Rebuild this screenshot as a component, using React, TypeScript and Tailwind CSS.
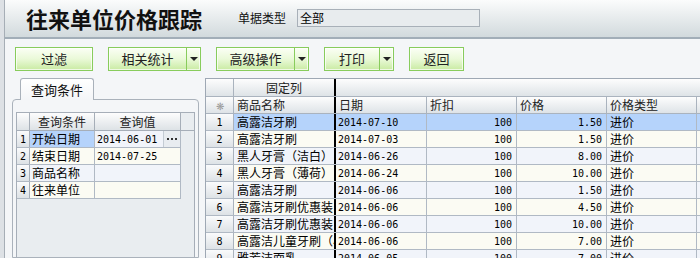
const CJK = "font-['Noto_Sans_CJK_SC','Noto_Sans',sans-serif]";
const MONO = "font-['DejaVu_Sans_Mono','Liberation_Mono',monospace] text-[10px]";

const rows = [
  { name: "高露洁牙刷", date: "2014-07-10", off: "100", price: "1.50", type: "进价", unit: "美佳超市" },
  { name: "高露洁牙刷", date: "2014-07-03", off: "100", price: "1.50", type: "进价", unit: "美佳超市" },
  { name: "黑人牙膏（洁白）", date: "2014-06-26", off: "100", price: "8.00", type: "进价", unit: "美佳超市" },
  { name: "黑人牙膏（薄荷）", date: "2014-06-24", off: "100", price: "10.00", type: "进价", unit: "美佳超市" },
  { name: "高露洁牙刷", date: "2014-06-06", off: "100", price: "1.50", type: "进价", unit: "工贸公司" },
  { name: "高露洁牙刷优惠装", date: "2014-06-06", off: "100", price: "4.50", type: "进价", unit: "工贸公司" },
  { name: "高露洁牙刷优惠装", date: "2014-06-06", off: "100", price: "10.00", type: "进价", unit: "工贸公司" },
  { name: "高露洁儿童牙刷（小）", date: "2014-06-06", off: "100", price: "7.00", type: "进价", unit: "工贸公司" },
  { name: "雅芳洁面乳", date: "2014-06-05", off: "100", price: "7.00", type: "进价", unit: "工贸公司" },
];

const conditions = [
  { label: "开始日期", value: "2014-06-01" },
  { label: "结束日期", value: "2014-07-25" },
  { label: "商品名称", value: "" },
  { label: "往来单位", value: "" },
];

function ToolButton({ label, width, menu }: { label: string; width: string; menu?: boolean }) {
  return (
    <div
      className={`flex h-[24px] shrink-0 ${width} border border-[#88cc5c] bg-linear-to-b from-[#fbfff5] via-[#eaf9d8] to-[#c9eba2] shadow-[inset_0_0_0_1px_rgba(255,255,255,0.7)]`}
    >
      <div className="flex flex-1 items-center justify-center text-[13px] text-[#222]">{label}</div>
      {menu && (
        <div className="flex w-[14px] shrink-0 items-center justify-center border-l border-[#88cc5c]">
          <span className="h-0 w-0 border-x-[4px] border-t-[4px] border-x-transparent border-t-[#222]" />
        </div>
      )}
    </div>
  );
}

function ConditionPanel() {
  return (
    <div className="flex w-[200px] shrink-0 flex-col pl-[7px] pr-[6px]">
      <div className="relative z-10 -mb-px ml-[8px] flex h-[22px] w-[74px] items-center justify-center rounded-t-[3px] border border-b-0 border-[#a9b1ba] bg-linear-to-b from-white to-[#f3f5f7] text-[13px] text-[#111]">
        查询条件
      </div>
      <div className="flex flex-1 flex-col rounded-t-[4px] border border-[#aab2bb] bg-[#f4f6f8] px-[3px] pt-[12px]">
        <div className="flex-1 border-l border-r border-t border-[#a6aeb8] bg-[#e9edf0] text-[12px]">
          <div className="flex h-[18px] border-b border-[#a6aeb8]">
            <div className="w-[13px] shrink-0 border-r border-[#a6aeb8] bg-linear-to-b from-[#fdfdfd] to-[#dde2e6]" />
            <div className="flex w-[65px] shrink-0 items-center justify-center border-r border-[#a6aeb8] bg-linear-to-b from-[#fdfdfd] to-[#dde2e6] text-[#222]">
              查询条件
            </div>
            <div className="flex w-[86px] shrink-0 items-center justify-center border-r border-[#a6aeb8] bg-linear-to-b from-[#fdfdfd] to-[#dde2e6] text-[#222]">
              查询值
            </div>
          </div>
          {conditions.map((c, i) => (
            <div key={c.label} className="flex h-[17px] w-[164px] border-b border-[#b0b9c4]">
              <div className={`flex w-[13px] shrink-0 items-center justify-center border-r border-[#a6aeb8] bg-linear-to-b from-[#fafbfc] to-[#dde2e6] ${MONO}`}>
                {i + 1}
              </div>
              <div
                className={`flex w-[65px] shrink-0 items-center whitespace-nowrap border-r border-[#b0b9c4] pl-[2px] ${
                  i === 0 ? "bg-[#b5d3fb]" : i % 2 ? "bg-[#fbfbf3]" : "bg-[#f1f4fa]"
                }`}
              >
                {c.label}
              </div>
              <div
                className={`flex w-[86px] shrink-0 items-center border-r border-[#b0b9c4] pl-[2px] ${
                  i % 2 ? "bg-[#fbfbf3]" : "bg-[#f1f4fa]"
                }`}
              >
                <span className={`min-w-0 flex-1 whitespace-nowrap ${MONO}`}>{c.value}</span>
                {i === 0 && (
                  <span className="flex h-full w-[17px] shrink-0 items-center justify-center gap-[2px] border-l border-[#c4ccd4] bg-[#e8ecf0]">
                    <span className="h-[2px] w-[2px] bg-[#333]" />
                    <span className="h-[2px] w-[2px] bg-[#333]" />
                    <span className="h-[2px] w-[2px] bg-[#333]" />
                  </span>
                )}
              </div>
            </div>
          ))}
        </div>
      </div>
    </div>
  );
}

function ResultGrid() {
  const head = "bg-linear-to-b from-[#fdfdfd] to-[#dee3e7]";
  return (
    <div className="min-w-0 flex-1 overflow-hidden border-l border-t border-[#9ea8b4] text-[12px]">
      <div className={`flex h-[18px] w-[600px] border-b border-[#aab3be] ${head}`}>
        <div className="w-[28px] shrink-0 border-r border-[#aab3be]" />
        <div className="flex w-[100px] shrink-0 items-center justify-center text-[#222]">固定列</div>
        <div className="w-[2px] shrink-0 bg-black" />
      </div>
      <div className={`flex h-[17px] w-[600px] border-b border-[#aab3be] ${head} text-[#222]`}>
        <div className="flex w-[28px] shrink-0 items-center justify-center border-r border-[#aab3be] text-[10px] text-[#9a9a9a]">
          ❋
        </div>
        <div className="flex w-[100px] shrink-0 items-center pl-[3px]">商品名称</div>
        <div className="w-[2px] shrink-0 bg-black" />
        <div className="flex w-[91px] shrink-0 items-center border-r border-[#aab3be] pl-[3px]">日期</div>
        <div className="flex w-[90px] shrink-0 items-center border-r border-[#aab3be] pl-[3px]">折扣</div>
        <div className="flex w-[90px] shrink-0 items-center border-r border-[#aab3be] pl-[3px]">价格</div>
        <div className="flex w-[90px] shrink-0 items-center border-r border-[#aab3be] pl-[3px]">价格类型</div>
        <div className="flex w-[90px] shrink-0 items-center pl-[3px]">上级单位</div>
      </div>
      {rows.map((r, i) => {
        const bg = i === 0 ? "bg-[#b5d3fb]" : i % 2 ? "bg-[#fbfbf3]" : "bg-[#f1f4fa]";
        return (
          <div key={i} className={`flex h-[17px] w-[600px] border-b border-[#b0b9c4] ${bg}`}>
            <div className={`flex w-[28px] shrink-0 items-center justify-center border-r border-[#aab3be] bg-linear-to-b from-[#fafbfc] to-[#dde2e6] ${MONO}`}>
              {i + 1}
            </div>
            <div className="flex w-[100px] shrink-0 items-center overflow-hidden whitespace-nowrap pl-[3px]">{r.name}</div>
            <div className="w-[2px] shrink-0 bg-black" />
            <div className={`flex w-[91px] shrink-0 items-center border-r border-[#b0b9c4] pl-[2px] ${MONO}`}>{r.date}</div>
            <div className={`flex w-[90px] shrink-0 items-center justify-end border-r border-[#b0b9c4] pr-[4px] ${MONO}`}>{r.off}</div>
            <div className={`flex w-[90px] shrink-0 items-center justify-end border-r border-[#b0b9c4] pr-[4px] ${MONO}`}>{r.price}</div>
            <div className="flex w-[90px] shrink-0 items-center border-r border-[#b0b9c4] pl-[3px]">{r.type}</div>
            <div className="flex w-[90px] shrink-0 items-center whitespace-nowrap pl-[3px]">{r.unit}</div>
          </div>
        );
      })}
    </div>
  );
}

export default function App() {
  return (
    <div className={`flex h-[258px] w-[700px] overflow-hidden bg-[#f4f6f8] text-black ${CJK}`}>
      <div className="w-[5px] shrink-0 border-r border-[#a6aeb6] bg-[#dde1e5]" />
      <div className="flex min-w-0 flex-1 flex-col">
        <div className="flex h-[39px] shrink-0 items-center border-b-2 border-[#a2aeb8] bg-linear-to-b from-[#fbfcfc] to-[#d2dadd] pb-[1px] pl-[21px]">
          <span className="whitespace-nowrap text-[22px] font-bold leading-none text-[#111]">往来单位价格跟踪</span>
          <span className="ml-[36px] whitespace-nowrap text-[12px] text-[#111]">单据类型</span>
          <div className="ml-[11px] h-[18px] w-[183px] shrink-0 border border-[#a8b0b8] bg-[#e8ecee] pl-[2px] text-[12px] leading-[15px]">
            全部
          </div>
        </div>
        <div className="flex h-[39px] shrink-0 gap-[15px] pl-[10px] pt-[8px]">
          <ToolButton label="过滤" width="w-[78px]" />
          <ToolButton label="相关统计" width="w-[93px]" menu />
          <ToolButton label="高级操作" width="w-[93px]" menu />
          <ToolButton label="打印" width="w-[70px]" menu />
          <ToolButton label="返回" width="w-[55px]" />
        </div>
        <div className="flex min-h-0 flex-1">
          <ConditionPanel />
          <ResultGrid />
        </div>
      </div>
    </div>
  );
}
